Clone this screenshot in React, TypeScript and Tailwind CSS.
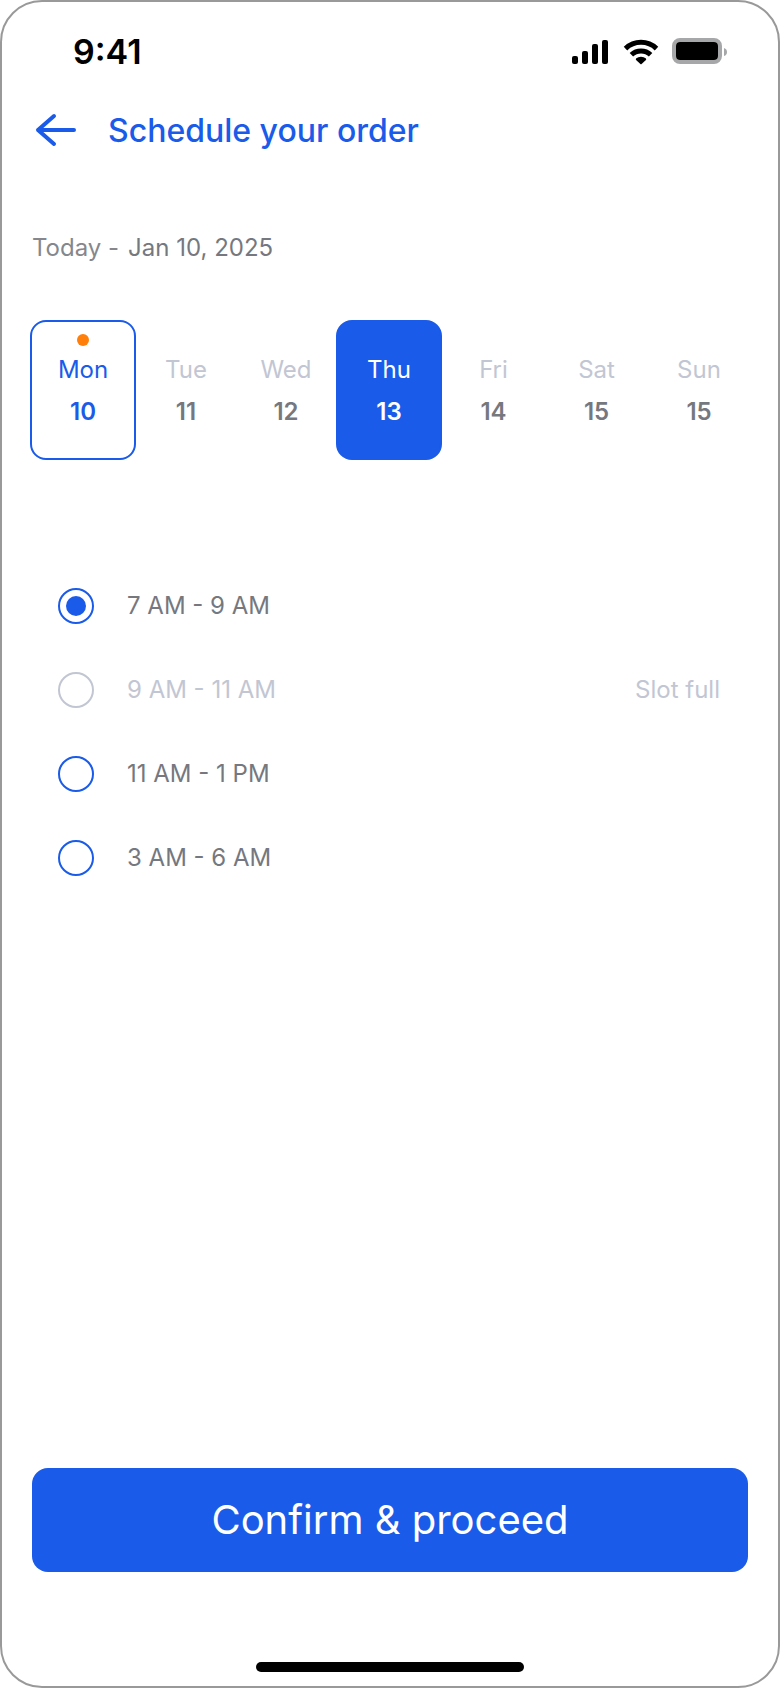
import { useState } from "react";

const days = [
  { name: "Mon", date: 10 },
  { name: "Tue", date: 11 },
  { name: "Wed", date: 12 },
  { name: "Thu", date: 13 },
  { name: "Fri", date: 14 },
  { name: "Sat", date: 15 },
  { name: "Sun", date: 15 },
];

const slots = [
  { label: "7 AM - 9 AM", full: false },
  { label: "9 AM - 11 AM", full: true },
  { label: "11 AM - 1 PM", full: false },
  { label: "3 AM - 6 AM", full: false },
];

function StatusBar() {
  return (
    <div className="flex h-[100px] items-center justify-between pr-[50px] pl-[71px]">
      <span className="text-[34px] leading-10 font-semibold text-black">9:41</span>
      <svg className="h-[28px] w-[156px]" viewBox="0 0 156 28" aria-hidden="true">
        <rect x="0" y="18" width="6" height="8" rx="2" />
        <rect x="10" y="13" width="6" height="13" rx="2" />
        <rect x="20" y="6" width="6" height="20" rx="2" />
        <rect x="30" y="2" width="6" height="24" rx="2" />
        <g fill="none" stroke="#000" strokeWidth="5">
          <path d="M53.5 10.600a22.4 22.4 0 0 1 31 0" />
          <path d="M59.4 16.800a14 14 0 0 1 19.2 0" />
        </g>
        <path d="M64 20.600a7.8 7.8 0 0 1 10 0l.2 1.100-4.600 4.200q-.6.5-1.200 0l-4.600-4.200z" />
        <rect x="102" y="2" width="46" height="22" rx="6" fill="#fff" stroke="#a6a7a8" strokeWidth="4" />
        <rect x="104" y="4" width="42" height="18" rx="4" />
        <path d="M152 10q3 1 3 4t-3 4z" fill="#a6a7a8" />
      </svg>
    </div>
  );
}

export default function App() {
  const [day, setDay] = useState(3);
  const [slot, setSlot] = useState(0);

  return (
    <div className="flex min-h-screen flex-col rounded-[42px] border-2 border-[#999] bg-white font-['Inter',sans-serif]">
      <StatusBar />

      <header className="flex h-[58px] items-center gap-[30px] pl-8">
        <button type="button" aria-label="Back" className="h-10 w-11">
          <svg viewBox="0 0 44 40" className="h-10 w-11" fill="none" stroke="#1a5be9" strokeWidth="4" strokeLinecap="round" strokeLinejoin="round">
            <path d="M40 19H4M20 5L4 19l16 14" />
          </svg>
        </button>
        <h1 className="text-[32px] leading-10 font-medium text-[#1a5be9]">Schedule your order</h1>
      </header>

      <main className="flex grow flex-col">
        <p className="mt-[72px] flex gap-[9px] pl-[30px] text-2xl text-[#75787f]">
          <span className="text-[#85878c]">Today -</span>
          <span>Jan 10, 2025</span>
        </p>

        <div className="mt-14 grid grid-cols-[106fr_100fr_100fr_106fr_103fr_103fr_102fr] px-7">
          {days.map((d, i) => {
            const selected = i === day;
            const today = i === 0;
            return (
              <button
                key={d.name}
                type="button"
                aria-pressed={selected}
                onClick={() => setDay(i)}
                className={`flex h-[140px] flex-col items-center rounded-2xl border-2 pt-3 ${
                  selected
                    ? "border-[#1a5be9] bg-[#1a5be9] text-white"
                    : today
                      ? "border-[#1a5be9] text-[#1a5be9]"
                      : "border-transparent text-[#75787f]"
                }`}
              >
                <span className={`size-3 rounded-full ${today ? "bg-[#ff7f0a]" : ""}`} />
                <span className={`mt-2 text-2xl ${!selected && !today ? "text-[#c2c6d3]" : ""}`}>{d.name}</span>
                <span className="mt-2.5 text-2xl font-semibold">{d.date}</span>
              </button>
            );
          })}
        </div>

        <fieldset className="mt-[128px] flex flex-col gap-12 pr-[58px] pl-14">
          {slots.map((s, i) => (
            <label key={s.label} className={`flex h-9 items-center text-2xl ${s.full ? "text-[#c2c6d3]" : "text-[#75787f]"}`}>
              <input
                type="radio"
                name="slot"
                disabled={s.full}
                checked={slot === i}
                onChange={() => setSlot(i)}
                className="mr-[33px] grid size-9 shrink-0 appearance-none place-items-center rounded-full border-2 border-[#1a5be9] checked:before:size-5 checked:before:rounded-full checked:before:bg-[#1a5be9] disabled:border-[#c2c6d3]"
              />
              <span>{s.label}</span>
              {s.full && <span className="ml-auto">Slot full</span>}
            </label>
          ))}
        </fieldset>

        <button type="button" className="mx-[30px] mt-auto h-[104px] rounded-2xl bg-[#1a5be9] text-[40px] text-white">
          Confirm &amp; proceed
        </button>
        <div className="mx-auto mt-[90px] mb-[14px] h-[10px] w-[268px] rounded-full bg-black" />
      </main>
    </div>
  );
}
